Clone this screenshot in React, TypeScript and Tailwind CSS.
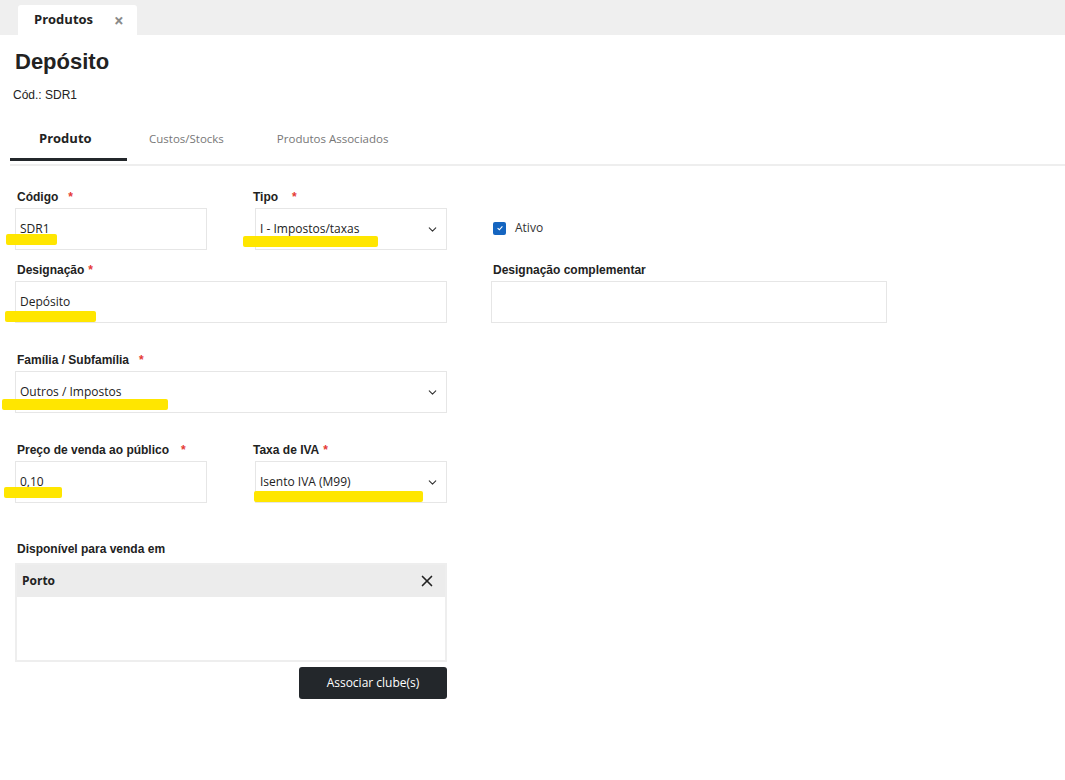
import { ChevronDown, X } from "lucide-react";

const ui = "font-['Open_Sans',sans-serif]";
const arial = "font-['Liberation_Sans',Arial,sans-serif]";

function Label({ text, gap = "ml-1", required = true }: { text: string; gap?: string; required?: boolean }) {
  return (
    <div className={`${arial} flex h-[23px] items-center text-[12px] font-bold text-[#222]`}>
      <span>{text}</span>
      {required ? <span className={`${gap} text-[#e53935]`}>*</span> : null}
    </div>
  );
}

function TextBox({ value, className = "" }: { value?: string; className?: string }) {
  return (
    <div className={`flex h-[42px] items-center border border-[#e6e6e6] bg-white px-[4px] text-[12px] text-[#222] ${ui} ${className}`}>
      {value}
    </div>
  );
}

function SelectBox({ value, className = "" }: { value: string; className?: string }) {
  return (
    <div className={`flex h-[42px] items-center justify-between border border-[#e6e6e6] bg-white pl-[4px] pr-[7px] text-[12px] text-[#222] ${ui} ${className}`}>
      <span>{value}</span>
      <ChevronDown size={13} strokeWidth={2} className="text-[#333]" />
    </div>
  );
}

// yellow marker strokes drawn on top of the screenshot
const marks = [
  { l: 6, t: 234, w: 51 },
  { l: 243, t: 236, w: 135 },
  { l: 5, t: 311, w: 91 },
  { l: 2, t: 399, w: 166 },
  { l: 4, t: 487, w: 58 },
  { l: 254, t: 491, w: 169 },
];

export default function App() {
  return (
    <div className="relative min-h-[780px] w-[1065px] overflow-hidden bg-white">
      <div className="flex h-[35px] items-end bg-[#efefef] pl-[18px]">
        <div className={`${ui} flex h-[30px] w-[119px] items-center rounded-t-[3px] bg-white pl-[16px] text-[13px] font-bold text-[#222]`}>
          <span>Produtos</span>
          <span className="ml-[21px] text-[17px] font-bold leading-none text-[#8a8a8a]">×</span>
        </div>
      </div>

      <div className="pl-[15px] pt-[13px]">
        <h1 className={`${arial} text-[22px] font-bold leading-[28px] text-[#222]`}>Depósito</h1>
        <div className={`${arial} -ml-[2px] mt-[11px] text-[12px] leading-[16px] text-[#222]`}>Cód.: SDR1</div>
      </div>

      <div className="ml-[10px] mt-[18px]">
        <div className={`${ui} flex h-[40px] items-start text-[11.5px]`}>
          <div className="flex h-[40px] w-[117px] flex-col justify-between">
            <span className="pl-[29px] pt-[8px] text-[13px] font-bold text-[#222]">Produto</span>
            <span className="h-[3px] w-full bg-[#23272b]" />
          </div>
          <span className="ml-[22px] pt-[9px] text-[#777]">Custos/Stocks</span>
          <span className="ml-[53px] pt-[9px] text-[#777]">Produtos Associados</span>
        </div>
        <div className="mt-[3px] h-[2px] w-full bg-[#eeeeee]" />
      </div>

      <div className="mt-[19px] pl-[15px]">
        <div className="flex items-start">
          <div className="flex w-[192px] flex-col">
            <div className="ml-[2px]"><Label text="Código" gap="ml-[10px]" /></div>
            <TextBox value="SDR1" />
          </div>
          <div className="ml-[48px] flex w-[192px] flex-col">
            <div className="-ml-[2px]"><Label text="Tipo" gap="ml-[14px]" /></div>
            <SelectBox value="I - Impostos/taxas" />
          </div>
          <label className={`${ui} ml-[46px] mt-[34px] flex items-center gap-[9px] text-[12px] text-[#333]`}>
            <span className="flex h-[13px] w-[13px] items-center justify-center rounded-[2px] bg-[#1565c0]">
              <svg viewBox="0 0 10 10" className="h-[8px] w-[8px]" fill="none" stroke="white" strokeWidth="1.4">
                <path d="M2 5.2 L4.2 7.2 L8 3" />
              </svg>
            </span>
            Ativo
          </label>
        </div>

        <div className="mt-[8px] flex items-start">
          <div className="flex w-[432px] flex-col">
            <div className="ml-[2px]"><Label text="Designação" /></div>
            <TextBox value="Depósito" />
          </div>
          <div className="ml-[44px] flex w-[396px] flex-col">
            <div className="ml-[2px]"><Label text="Designação complementar" required={false} /></div>
            <TextBox />
          </div>
        </div>

        <div className="mt-[25px] flex w-[432px] flex-col">
          <div className="ml-[2px]"><Label text="Família / Subfamília" gap="ml-[10px]" /></div>
          <SelectBox value="Outros / Impostos" />
        </div>

        <div className="mt-[25px] flex items-start">
          <div className="flex w-[192px] flex-col">
            <div className="ml-[2px]"><Label text="Preço de venda ao público" gap="ml-[12px]" /></div>
            <TextBox value="0,10" />
          </div>
          <div className="ml-[48px] flex w-[192px] flex-col">
            <div className="-ml-[2px]"><Label text="Taxa de IVA" /></div>
            <SelectBox value="Isento IVA (M99)" />
          </div>
        </div>

        <div className="mt-[34px] w-[432px]">
          <div className="ml-[2px]"><Label text="Disponível para venda em" required={false} /></div>
          <div className="mt-[3px] border-2 border-[#eeeeee]">
            <div className={`${ui} flex h-[32px] items-center justify-between bg-[#ececec] pl-[5px] pr-[9px] text-[12px] font-bold text-[#222]`}>
              <span>Porto</span>
              <X size={18} strokeWidth={2.2} className="text-[#222]" />
            </div>
            <div className="h-[63px] bg-white" />
          </div>
          <div className="mt-[5px] flex justify-end">
            <button className={`${ui} h-[32px] w-[148px] rounded-[3px] bg-[#23272b] text-[12px] text-white`}>
              Associar clube(s)
            </button>
          </div>
        </div>
      </div>

      {marks.map((m, i) => (
        <div
          key={i}
          className="absolute h-[11px] rounded-[2px] bg-[#ffe600]"
          style={{ left: m.l, top: m.t, width: m.w }}
        />
      ))}
    </div>
  );
}
